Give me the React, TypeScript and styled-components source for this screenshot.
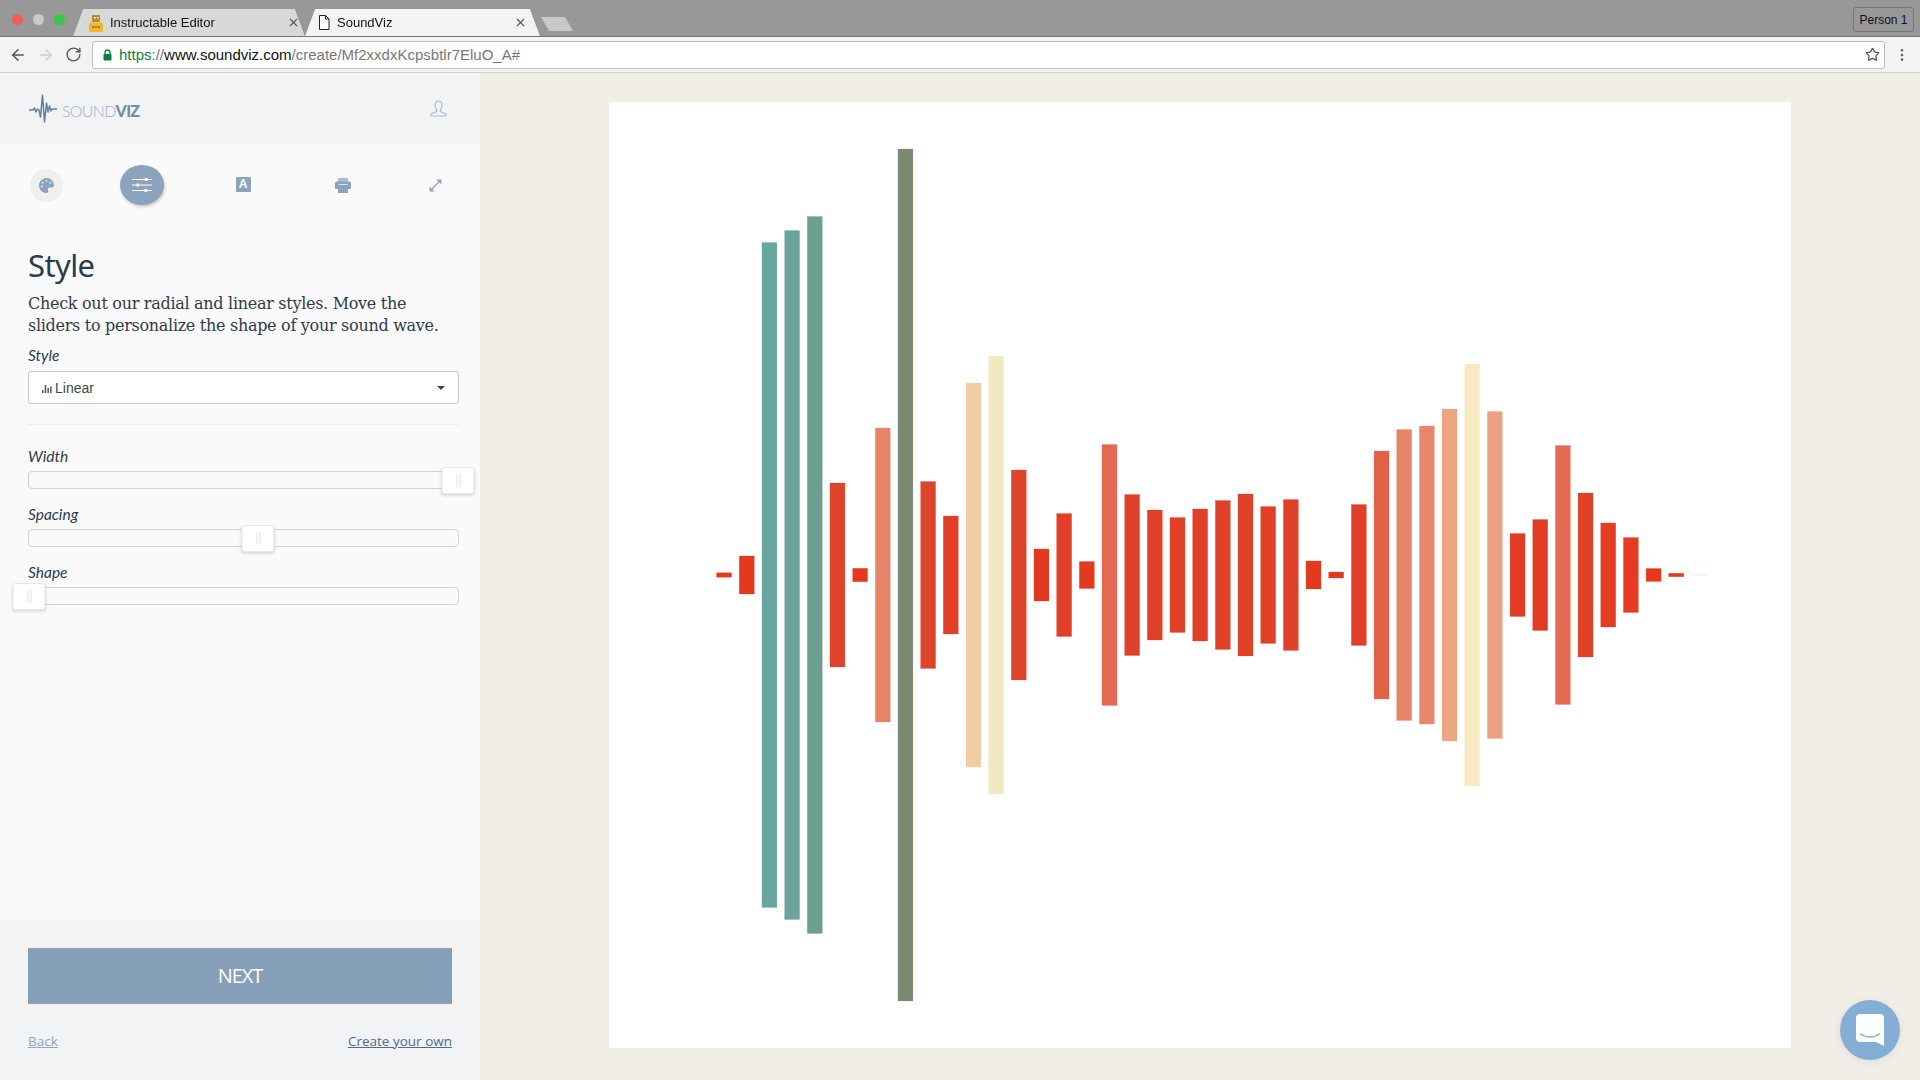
import React from 'react';
import styled, { createGlobalStyle } from 'styled-components';
import { ArrowLeft, ArrowRight, RotateCw, Star, EllipsisVertical, X } from 'lucide-react';
import { FaPalette } from 'react-icons/fa';

const GlobalStyle = createGlobalStyle`
  html, body {
    margin: 0;
    padding: 0;
    height: 100%;
    overflow: hidden;
    font-family: 'Liberation Sans', Arial, sans-serif;
  }
  #root {
    height: 100%;
  }
`;

const Page = styled.div`
  width: 1920px;
  height: 1080px;
  display: flex;
  flex-direction: column;
  position: relative;
`;

/* browser chrome */
const TabBar = styled.div`
  height: 36px;
  background: #989898;
  border-bottom: 1px solid #777;
  display: flex;
  align-items: flex-end;
  padding: 0 6px 0 12px;
  box-sizing: content-box;
`;

const Lights = styled.div`
  display: flex;
  gap: 10px;
  align-self: flex-start;
  margin-top: 14px;
  width: 61px;
`;

const Light = styled.span<{ $color: string }>`
  width: 11px;
  height: 11px;
  border-radius: 50%;
  background: ${p => p.$color};
`;

const Tab = styled.div<{ $active?: boolean }>`
  position: relative;
  width: ${p => (p.$active ? '235px' : '232px')};
  height: 27px;
  display: flex;
  align-items: center;
  gap: ${p => (p.$active ? '7px' : '6px')};
  padding: 0 ${p => (p.$active ? '13px' : '5px')} 0 ${p => (p.$active ? '13px' : '15px')};
  box-sizing: border-box;
  font-size: 13px;
  color: #111;
  filter: drop-shadow(0 0 0.6px #555);
  z-index: ${p => (p.$active ? 2 : 1)};

  &::before {
    content: '';
    position: absolute;
    inset: 0;
    z-index: -1;
    background: ${p => (p.$active ? '#f3f3f3' : '#d8d8d8')};
    clip-path: polygon(0 100%, 10px 0, calc(100% - 10px) 0, 100% 100%);
  }
`;

const TabTitle = styled.span`
  flex: 1;
  white-space: nowrap;
`;

const NewTab = styled.div`
  width: 32px;
  height: 14px;
  margin: 0 0 5px 1px;
  background: #c8c8c8;
  clip-path: polygon(0 0, 75% 0, 100% 100%, 25% 100%);
`;

const PersonButton = styled.div`
  margin: 0 0 4px auto;
  width: 61px;
  height: 25px;
  border: 1px solid #777;
  border-radius: 3px;
  box-sizing: border-box;
  font-size: 12px;
  color: #111;
  display: flex;
  align-items: center;
  justify-content: center;
  white-space: nowrap;
`;

const Toolbar = styled.div`
  height: 36px;
  background: #f3f3f3;
  border-bottom: 1px solid #cfcfcf;
  display: flex;
  align-items: center;
  padding: 0 0 0 9px;
  box-sizing: border-box;
`;

const NavButton = styled.div<{ $color: string }>`
  width: 28px;
  display: flex;
  justify-content: flex-start;
  color: ${p => p.$color};
`;

const Omnibox = styled.div`
  width: 1793px;
  height: 28px;
  margin-left: -1px;
  background: #fff;
  border: 1px solid #bdbdbd;
  border-radius: 3px;
  box-sizing: border-box;
  display: flex;
  align-items: center;
  padding: 0 4px 0 10px;
  font-size: 15px;
  color: #777;
`;

const UrlText = styled.span`
  margin-left: 7px;
  flex: 1;
  white-space: nowrap;
`;

const UrlPart = styled.span<{ $color: string }>`
  color: ${p => p.$color};
`;

const MenuButton = styled.div`
  width: 33px;
  display: flex;
  justify-content: center;
  color: #666;
`;

/* app */
const Body = styled.div`
  flex: 1;
  display: flex;
  min-height: 0;
`;

const Sidebar = styled.aside`
  width: 480px;
  flex: none;
  background: #fafafa;
  display: flex;
  flex-direction: column;
`;

const SidebarHeader = styled.header`
  height: 71px;
  flex: none;
  background: #f2f3f5;
  display: flex;
  align-items: center;
  justify-content: space-between;
  padding: 0 33px 0 29px;
  box-sizing: border-box;
`;

const Logo = styled.div`
  display: flex;
  align-items: center;
  gap: 3px;
  margin-top: 3px;
`;

const LogoText = styled.span`
  font-family: Lato, 'Open Sans', sans-serif;
  font-size: 16px;
  font-weight: 300;
  letter-spacing: -0.7px;
  color: #9fb0c2;
`;

const LogoStrong = styled.b`
  font-weight: 900;
  color: #6f8ba8;
`;

const StepRow = styled.nav`
  display: grid;
  grid-template-columns: 93px 98px 104px 96px 89px;
  height: 44px;
  margin-top: 19px;
  align-items: center;
  justify-items: center;
  color: #8ba3bd;
`;

const StepCircle = styled.div<{ $active?: boolean }>`
  width: ${p => (p.$active ? '44px' : '33px')};
  height: ${p => (p.$active ? '40px' : '33px')};
  border-radius: 50%;
  display: flex;
  align-items: center;
  justify-content: center;
  background: ${p => (p.$active ? '#8ba3bd' : '#efefef')};
  box-shadow: ${p => (p.$active ? '1px 2px 3px rgba(0, 0, 0, 0.18)' : 'none')};
`;

const LetterIcon = styled.div`
  width: 15px;
  height: 15px;
  margin-top: -2px;
  background: #8ba3bd;
  border-radius: 1px;
  color: #fff;
  font-size: 12px;
  font-weight: 700;
  line-height: 15px;
  text-align: center;
`;

const Panel = styled.section`
  padding: 37px 21px 0 28px;
`;

const Title = styled.h1`
  margin: 0;
  font-family: 'Noto Sans', 'Open Sans', sans-serif;
  font-size: 31px;
  font-weight: 400;
  line-height: 42px;
  letter-spacing: -0.6px;
  color: #2b3a4d;
`;

const Description = styled.p`
  margin: 7px 0 8px;
  font-family: 'DejaVu Serif', serif;
  font-size: 16px;
  line-height: 22px;
  letter-spacing: -0.29px;
  white-space: nowrap;
  color: #2f3b4c;
`;

const FieldLabel = styled.label`
  display: block;
  font-family: Lato, 'Open Sans', sans-serif;
  font-style: italic;
  font-size: 15.5px;
  line-height: 20px;
  color: #2b3a4d;
`;

const SelectBox = styled.div`
  height: 33px;
  margin-top: 6px;
  background: #fff;
  border: 1px solid #c8c8c8;
  border-radius: 3px;
  box-sizing: border-box;
  display: flex;
  align-items: center;
  padding: 0 13px 0 13px;
  gap: 3px;
  font-size: 14px;
  color: #444;
`;

const Caret = styled.span`
  margin-left: auto;
  width: 0;
  height: 0;
  border-left: 4px solid transparent;
  border-right: 4px solid transparent;
  border-top: 4px solid #444;
`;

const Divider = styled.hr`
  margin: 20px 0 21px;
  border: 0;
  border-top: 1px solid #eeeeee;
`;

const SliderGroup = styled.div`
  display: flex;
  flex-direction: column;
  gap: 15px;
`;

const SliderField = styled.div`
  display: flex;
  flex-direction: column;
`;

const Track = styled.div`
  position: relative;
  height: 18px;
  margin-top: 5px;
  background: #fafafa;
  border: 1px solid #d4d4d4;
  border-radius: 4px;
  box-sizing: border-box;
`;

const Handle = styled.div`
  position: absolute;
  top: -5px;
  width: 33px;
  height: 27px;
  transform: translateX(-50%);
  background: #fff;
  border: 1px solid #e6e6e6;
  border-radius: 3px;
  box-sizing: border-box;
  box-shadow: 0 2px 3px rgba(0, 0, 0, 0.12);

  &::after {
    content: '';
    position: absolute;
    left: 50%;
    top: 6px;
    width: 4px;
    height: 13px;
    transform: translateX(-50%);
    border-left: 1px solid #e2e2e2;
    border-right: 1px solid #e2e2e2;
    box-sizing: border-box;
  }
`;

const SidebarFooter = styled.footer`
  margin-top: auto;
  height: 160px;
  flex: none;
  background: #f2f3f5;
  padding: 28px 28px 0;
  box-sizing: border-box;
`;

const NextButton = styled.button`
  width: 100%;
  height: 56px;
  border: 0;
  padding: 0 0 2px;
  background: #87a0ba;
  color: #fff;
  font-family: 'Open Sans', sans-serif;
  font-size: 20px;
  letter-spacing: -1px;
`;

const FooterLinks = styled.div`
  display: flex;
  justify-content: space-between;
  margin-top: 27px;
`;

const FooterLink = styled.a<{ $muted?: boolean }>`
  font-family: 'Open Sans', sans-serif;
  font-size: 13.5px;
  line-height: 20px;
  text-decoration: underline;
  color: ${p => (p.$muted ? '#8fa6c0' : '#4f6b8a')};
`;

const Main = styled.main`
  flex: 1;
  background: #f1eee8;
  display: flex;
  justify-content: center;
  padding-top: 29px;
`;

const Canvas = styled.div`
  width: 1182px;
  height: 946px;
  background: #fff;
`;

const ChatBubble = styled.div`
  position: absolute;
  right: 20px;
  bottom: 20px;
  width: 60px;
  height: 60px;
  border-radius: 50%;
  background: #85aed4;
  box-shadow: 0 1px 8px rgba(0, 0, 0, 0.08);
  display: flex;
  align-items: center;
  justify-content: center;
`;

// height and colour of each bar of the wave, left to right
const BARS: [number, string][] = [
  [4.5, '#e5391e'], [38, '#e5391e'], [665, '#69a59f'], [689, '#6ba49a'], [717, '#6c9f90'],
  [184, '#df4329'], [13.4, '#e5391e'], [294, '#e88468'], [852, '#7a8b70'], [187, '#dc442c'],
  [118, '#e13f25'], [384, '#f3cda6'], [438, '#f1e9c2'], [210, '#dc442c'], [52, '#e5391e'],
  [123, '#e13f27'], [27, '#e5391e'], [261, '#e36950'], [161, '#de422a'], [130, '#e04027'],
  [115, '#e23f27'], [132, '#e04027'], [149, '#df4129'], [162, '#df4229'], [137, '#e04028'],
  [151, '#e04028'], [28, '#e5391e'], [6, '#e5391e'], [141, '#e04028'], [248, '#e26248'],
  [291, '#e68467'], [298, '#e6866a'], [332, '#eca583'], [422, '#f8e9c3'], [327, '#eba180'],
  [83, '#e23d24'], [111, '#e23d24'], [259, '#e26a52'], [164, '#df4129'], [104, '#e33c23'],
  [75, '#e33c23'], [13, '#e5391e'], [3.5, '#e5391e'], [1.5, '#fdf1ee'],
];

const Wave = () => (
  <svg width="1182" height="946" viewBox="0 0 1182 946">
    {BARS.map(([h, color], i) => (
      <rect
        key={i}
        x={107.6 + i * 22.67}
        y={473 - h / 2}
        width={15}
        height={h}
        fill={color}
        stroke={color}
        strokeOpacity={0.35}
        strokeWidth={0.6}
      />
    ))}
  </svg>
);

const RobotFavicon = () => (
  <svg width="16" height="18" viewBox="0 0 16 18">
    <rect x="4" y="1" width="8" height="7" rx="1" fill="#b8892f" />
    <rect x="6" y="3" width="1.6" height="1.6" fill="#fff" />
    <rect x="9" y="3" width="1.6" height="1.6" fill="#fff" />
    <path d="M1 18V11c0-1.500 1-2.500 2.500-2.500h9C14 8.500 15 9.500 15 11v7z" fill="#f3b62c" />
    <circle cx="5" cy="13" r="0.9" fill="#7a5a12" />
    <circle cx="8" cy="13" r="0.9" fill="#7a5a12" />
    <circle cx="11" cy="13" r="0.9" fill="#7a5a12" />
  </svg>
);

const DocFavicon = () => (
  <svg width="12" height="15" viewBox="0 0 12 15" fill="#fff" stroke="#222" strokeWidth="1">
    <path d="M1.500 0.500h6l3.500 3.500v10.500h-9.500z" />
    <path d="M7.500 0.500v3.500h3.500" fill="none" />
  </svg>
);

const LockIcon = () => (
  <svg width="9" height="12" viewBox="0 0 9 12">
    <path d="M2 5V3.500a2.500 2.500 0 0 1 5 0V5" fill="none" stroke="#0b8043" strokeWidth="1.300" />
    <rect x="0.500" y="5" width="8" height="6.500" rx="0.800" fill="#0b8043" />
  </svg>
);

const LogoMark = () => (
  <svg width="30" height="32" viewBox="0 0 30 32" fill="none" stroke="#5f7f9f" strokeWidth="1.500">
    <path d="M0 16h4l1.500-2 1.500 4 1.500-3 1.500 1 1.500 7 2-22 2 27 2-19 1.500 9 1.500-6 1.500 5 1-2h5" strokeLinejoin="round" />
  </svg>
);

const UserIcon = () => (
  <svg width="17" height="17" viewBox="0 0 17 17" fill="none" stroke="#aebccd" strokeWidth="1.200">
    <path d="M5 5.500C5 2.500 6.500 1 8.500 1S12 2.500 12 5.500c0 2.200-1 3.500-1.600 4.300v1.700l5.600 2.500v2H1v-2l5.600-2.500V9.800C6 9 5 7.700 5 5.500z" />
  </svg>
);

const SlidersIcon = () => (
  <svg width="20" height="16" viewBox="0 0 20 16" stroke="#fff" strokeWidth="1.200" fill="#fff">
    <path d="M0 2.500h20M0 8h20M0 13.500h20" />
    <rect x="13" y="1" width="2.500" height="3" stroke="none" />
    <rect x="4.500" y="6.500" width="2.500" height="3" stroke="none" />
    <rect x="12.500" y="12" width="2.500" height="3" stroke="none" />
  </svg>
);

const PrinterIcon = () => (
  <svg width="16" height="15" viewBox="0 0 16 15">
    <rect x="3" y="0" width="10" height="4" fill="#a9bccf" />
    <path d="M1.500 3.500h13A1.500 1.500 0 0 1 16 5v5a1 1 0 0 1-1 1h-2v4H3v-4H1a1 1 0 0 1-1-1V5a1.500 1.500 0 0 1 1.500-1.500z" fill="#8ba3bd" />
    <path d="M3.500 6.500h9" stroke="#dbe3ec" strokeWidth="1" />
  </svg>
);

const ExpandIcon = () => (
  <svg width="13" height="13" viewBox="0 0 13 13" fill="#8ba3bd" stroke="#8ba3bd">
    <path d="M2 11L11 2" strokeWidth="1.300" />
    <path d="M7.500 0.500h5v5z" stroke="none" />
    <path d="M0.500 7.500v5h5z" stroke="none" />
  </svg>
);

const BarsGlyph = () => (
  <svg width="10" height="10" viewBox="0 0 10 10" fill="#555">
    <rect x="0" y="7" width="1.500" height="3" />
    <rect x="2.700" y="2" width="1.500" height="8" />
    <rect x="5.400" y="5" width="1.500" height="5" />
    <rect x="8.100" y="3.500" width="1.500" height="6.500" />
  </svg>
);

const ChatIcon = () => (
  <svg width="28" height="32" viewBox="0 0 28 32">
    <path d="M4 0h20a4 4 0 0 1 4 4v28l-8-4H4a4 4 0 0 1-4-4V4a4 4 0 0 1 4-4z" fill="#fff" />
    <path d="M4.500 20c5.500 4 13.500 4 19 0" fill="none" stroke="#85aed4" strokeWidth="1.500" strokeLinecap="round" />
  </svg>
);

const SLIDERS = [
  { label: 'Width', left: 429 },
  { label: 'Spacing', left: 229 },
  { label: 'Shape', left: 0 },
];

const App: React.FC = () => (
  <Page>
    <GlobalStyle />
    <TabBar>
      <Lights>
        <Light $color="#f25c5c" />
        <Light $color="#c9c9c9" />
        <Light $color="#38c74a" />
      </Lights>
      <Tab>
        <RobotFavicon />
        <TabTitle>Instructable Editor</TabTitle>
        <X size={13} strokeWidth={2} color="#555" />
      </Tab>
      <Tab $active>
        <DocFavicon />
        <TabTitle>SoundViz</TabTitle>
        <X size={13} strokeWidth={2} color="#555" />
      </Tab>
      <NewTab />
      <PersonButton>Person 1</PersonButton>
    </TabBar>
    <Toolbar>
      <NavButton $color="#555"><ArrowLeft size={18} /></NavButton>
      <NavButton $color="#ccc"><ArrowRight size={18} /></NavButton>
      <NavButton $color="#555"><RotateCw size={17} /></NavButton>
      <Omnibox>
        <LockIcon />
        <UrlText>
          <UrlPart $color="#0b8043">https</UrlPart>://
          <UrlPart $color="#111">www.soundviz.com</UrlPart>/create/Mf2xxdxKcpsbtlr7EluO_A#
        </UrlText>
        <Star size={15} color="#555" />
      </Omnibox>
      <MenuButton><EllipsisVertical size={16} /></MenuButton>
    </Toolbar>
    <Body>
      <Sidebar>
        <SidebarHeader>
          <Logo>
            <LogoMark />
            <LogoText>SOUND<LogoStrong>VIZ</LogoStrong></LogoText>
          </Logo>
          <UserIcon />
        </SidebarHeader>
        <StepRow>
          <StepCircle><FaPalette size={15} /></StepCircle>
          <StepCircle $active><SlidersIcon /></StepCircle>
          <LetterIcon>A</LetterIcon>
          <PrinterIcon />
          <ExpandIcon />
        </StepRow>
        <Panel>
          <Title>Style</Title>
          <Description>
            Check out our radial and linear styles. Move the
            <br />
            sliders to personalize the shape of your sound wave.
          </Description>
          <FieldLabel>Style</FieldLabel>
          <SelectBox>
            <BarsGlyph />
            Linear
            <Caret />
          </SelectBox>
          <Divider />
          <SliderGroup>
            {SLIDERS.map(s => (
              <SliderField key={s.label}>
                <FieldLabel>{s.label}</FieldLabel>
                <Track>
                  <Handle style={{ left: s.left }} />
                </Track>
              </SliderField>
            ))}
          </SliderGroup>
        </Panel>
        <SidebarFooter>
          <NextButton>NEXT</NextButton>
          <FooterLinks>
            <FooterLink $muted>Back</FooterLink>
            <FooterLink>Create your own</FooterLink>
          </FooterLinks>
        </SidebarFooter>
      </Sidebar>
      <Main>
        <Canvas>
          <Wave />
        </Canvas>
      </Main>
    </Body>
    <ChatBubble>
      <ChatIcon />
    </ChatBubble>
  </Page>
);

export default App;
